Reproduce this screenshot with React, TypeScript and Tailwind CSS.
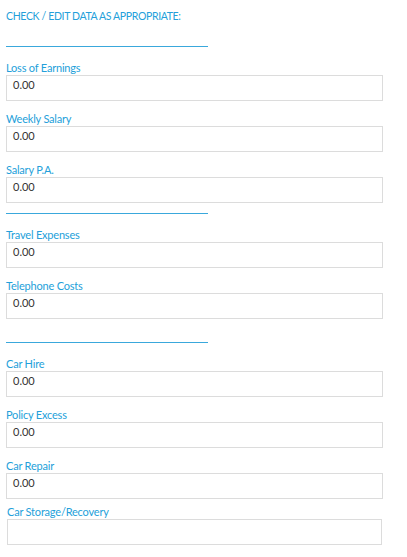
import React from 'react';

type Field = { label: string; value: string };

const earnings: Field[] = [
  { label: 'Loss of Earnings', value: '0.00' },
  { label: 'Weekly Salary', value: '0.00' },
  { label: 'Salary P.A.', value: '0.00' },
];

const expenses: Field[] = [
  { label: 'Travel Expenses', value: '0.00' },
  { label: 'Telephone Costs', value: '0.00' },
];

const carFields: Field[] = [
  { label: 'Car Hire', value: '0.00' },
  { label: 'Policy Excess', value: '0.00' },
  { label: 'Car Repair', value: '0.00' },
];

const FieldRow = ({ label, value }: Field) => (
  <div className="flex flex-col">
    <label className="text-[11px] leading-[14px] tracking-[-0.2px] text-[#249fda]">{label}</label>
    <div className="h-[26px] w-[377px] border border-[#dcdcdc] bg-white pl-[6px] pt-[1px] text-[11px] leading-[16px] text-[#333]">
      {value}
    </div>
  </div>
);

const FieldGroup = ({ fields }: { fields: Field[] }) => (
  <div className="flex flex-col gap-[11px]">
    {fields.map((f) => (
      <FieldRow key={f.label} {...f} />
    ))}
  </div>
);

const Divider = () => <div className="h-px w-[202px] bg-[#3aa8dc]" />;

export default function App() {
  return (
    <div
      className="min-h-screen bg-white px-[6px] pt-[8px]"
      style={{ fontFamily: 'Lato, "Open Sans", Arial, sans-serif' }}
    >
      <h2 className="text-[10.5px] leading-[16px] tracking-[-0.35px] text-[#249fda]">
        CHECK / EDIT DATA AS APPROPRIATE:
      </h2>

      <div className="mt-[22px]">
        <Divider />
      </div>

      <div className="mt-[14px]">
        <FieldGroup fields={earnings} />
      </div>

      <div className="mt-[10px]">
        <Divider />
      </div>

      <div className="mt-[14px]">
        <FieldGroup fields={expenses} />
      </div>

      <div className="mt-[23px]">
        <Divider />
      </div>

      <div className="mt-[14px]">
        <FieldGroup fields={carFields} />
      </div>

      <div className="mt-[6px] flex flex-col pl-px">
        <label className="text-[11px] leading-[14px] tracking-[-0.2px] text-[#249fda]">Car Storage/Recovery</label>
        <div className="h-[26px] w-[375px] border border-[#dcdcdc] bg-white" />
      </div>
    </div>
  );
}
